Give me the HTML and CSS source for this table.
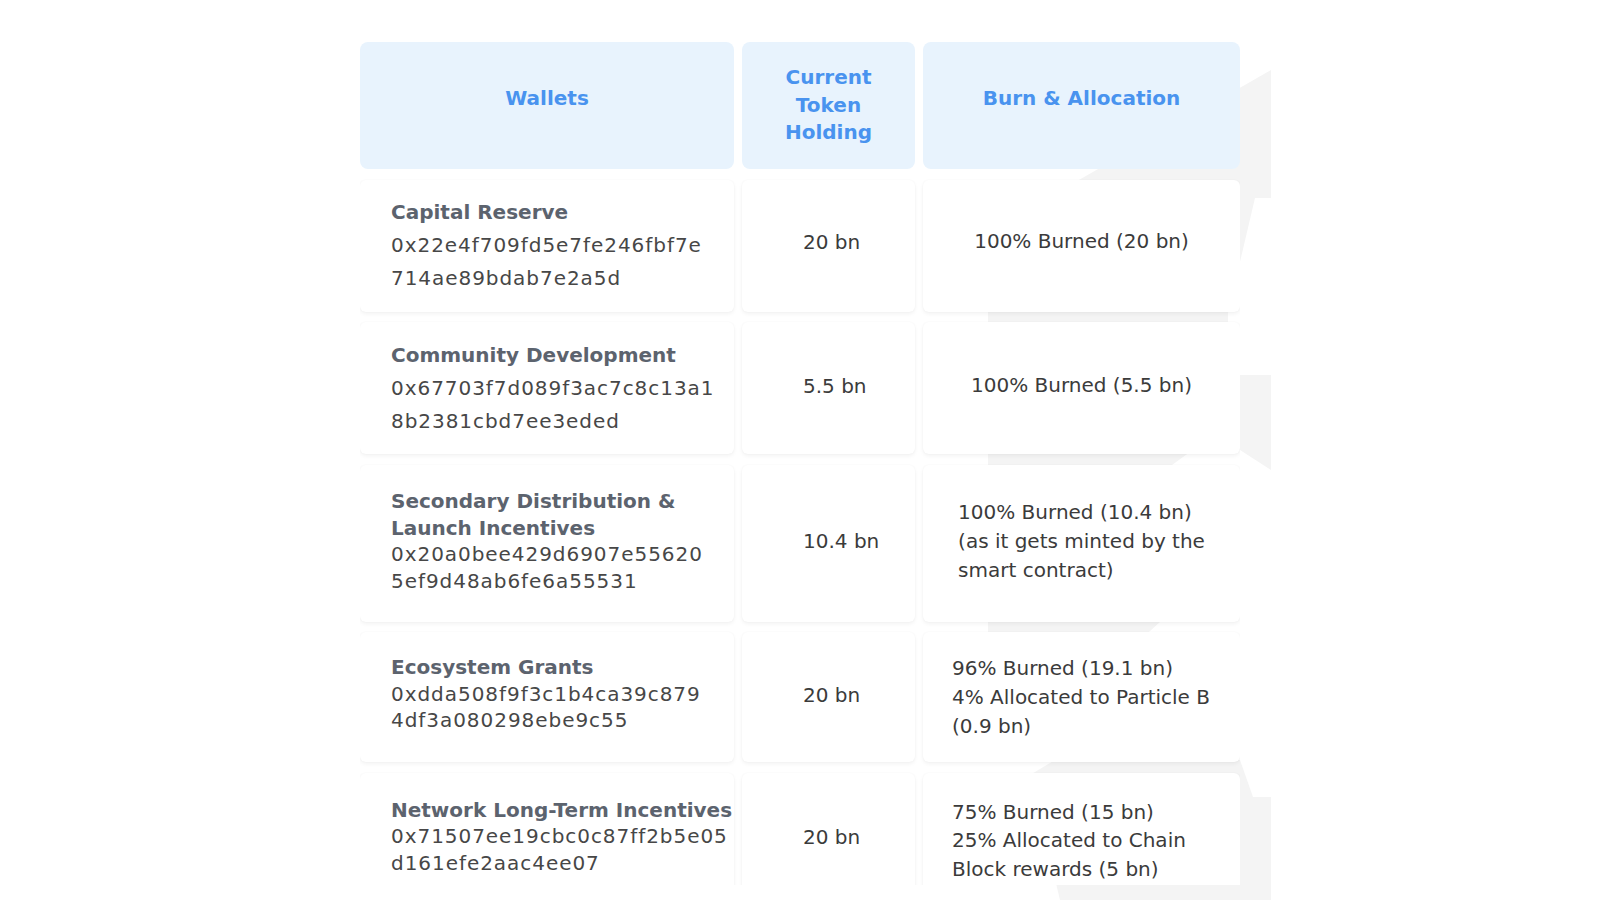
FILE: index.html
```html
<!DOCTYPE html>
<html lang="en">
<head>
<meta charset="utf-8">
<title>Wallets</title>
<link rel="stylesheet" href="styles.css">
</head>
<body>
<div class="stage">
  <svg class="backdrop" width="1600" height="900" viewBox="0 0 1600 900" aria-hidden="true">
    <polygon points="988,232 1271,70 1271,198 1255,198 1228,313 1228,322 988,322"/>
    <polygon points="988,322 1228,322 1239,375 1271,375 1271,470 1240,450 1190,452 1165,470 1160,622 1140,640 988,640"/>
    <polygon points="1030,775 1055,760 1240,760 1253,797 1271,797 1271,900 1060,900"/>
  </svg>

  <div class="table-clip">
    <div class="table">
      <div class="th th--single">Wallets</div>
      <div class="th">Current<br>Token<br>Holding</div>
      <div class="th th--single">Burn &amp; Allocation</div>

      <div class="td td-wallet td-wallet--loose">
        <div class="wallet-name">Capital Reserve</div>
        <div class="wallet-addr">0x22e4f709fd5e7fe246fbf7e<br>714ae89bdab7e2a5d</div>
      </div>
      <div class="td td-amount td-amount--r1">20 bn</div>
      <div class="td td-alloc td-alloc--r1"><div class="alloc">100% Burned (20 bn)</div></div>

      <div class="td td-wallet td-wallet--loose">
        <div class="wallet-name">Community Development</div>
        <div class="wallet-addr">0x67703f7d089f3ac7c8c13a1<br>8b2381cbd7ee3eded</div>
      </div>
      <div class="td td-amount td-amount--r2">5.5 bn</div>
      <div class="td td-alloc td-alloc--r2"><div class="alloc">100% Burned (5.5 bn)</div></div>

      <div class="td td-wallet td-wallet--r3">
        <div class="wallet-name">Secondary Distribution &amp;<br>Launch Incentives</div>
        <div class="wallet-addr">0x20a0bee429d6907e55620<br>5ef9d48ab6fe6a55531</div>
      </div>
      <div class="td td-amount">10.4 bn</div>
      <div class="td td-alloc"><div class="alloc">100% Burned (10.4 bn)<br>(as it gets minted by the<br>smart contract)</div></div>

      <div class="td td-wallet td-wallet--r4">
        <div class="wallet-name">Ecosystem Grants</div>
        <div class="wallet-addr">0xdda508f9f3c1b4ca39c879<br>4df3a080298ebe9c55</div>
      </div>
      <div class="td td-amount">20 bn</div>
      <div class="td td-alloc td-alloc--r4"><div class="alloc alloc--fill">96% Burned (19.1 bn)<br>4% Allocated to Particle B<br>(0.9 bn)</div></div>

      <div class="td td-wallet">
        <div class="wallet-name">Network Long-Term Incentives</div>
        <div class="wallet-addr">0x71507ee19cbc0c87ff2b5e05<br>d161efe2aac4ee07</div>
      </div>
      <div class="td td-amount td-amount--r5">20 bn</div>
      <div class="td td-alloc td-alloc--r5"><div class="alloc alloc--fill">75% Burned (15 bn)<br>25% Allocated to Chain<br>Block rewards (5 bn)</div></div>
    </div>
  </div>
</div>
</body>
</html>
```
FILE: styles.css
```css
* { box-sizing: border-box; }

html, body {
  margin: 0;
  background: #ffffff;
}

body {
  font-family: "DejaVu Sans", "Noto Sans", sans-serif;
  font-size: 20px;
  color: #454545;
}

.stage {
  position: relative;
  width: 1600px;
  height: 900px;
  overflow: hidden;
}

.backdrop {
  position: absolute;
  top: 0;
  left: 0;
  z-index: 0;
  fill: #f4f4f4;
}

.table-clip {
  position: relative;
  z-index: 1;
  width: 880px;
  height: 885px;
  margin: 0 auto;
  padding-top: 42px;
  overflow: hidden;
}

.table {
  display: grid;
  grid-template-columns: 374px 173px 317px;
  grid-template-rows: 127px 132px 132px 157px 130px 127px;
  column-gap: 8px;
  row-gap: 10.6px;
}

/* header */
.th {
  display: flex;
  align-items: center;
  justify-content: center;
  text-align: center;
  background: #e8f3fd;
  border-radius: 8px;
  color: #4993ef;
  font-weight: 700;
  font-size: 20px;
  line-height: 27.5px;
}

.th--single {
  padding-bottom: 14px;
}

/* body cells */
.td {
  display: flex;
  align-items: center;
  background: #ffffff;
  border-radius: 6px;
  box-shadow: 0 2px 4px rgba(0, 0, 0, 0.05), 0 0 2px rgba(0, 0, 0, 0.04);
}

.td-wallet {
  flex-direction: column;
  align-items: flex-start;
  justify-content: center;
  padding-left: 31px;
  line-height: 26.6px;
}

.td-wallet--loose {
  line-height: 33px;
}

.td-wallet--r3 {
  padding-bottom: 4px;
}

.td-wallet--r4 {
  padding-bottom: 7px;
}

.wallet-name {
  font-weight: 700;
  color: #5c636e;
  white-space: nowrap;
}

.wallet-addr {
  color: #474747;
  letter-spacing: 0.95px;
  white-space: nowrap;
}

.td-amount {
  padding-left: 61px;
  padding-bottom: 4px;
  color: #3b3b3b;
}

.td-amount--r1 { padding-bottom: 8px; }
.td-amount--r2 { padding-bottom: 5px; }
.td-amount--r5 { padding-bottom: 0; padding-top: 2px; }

.td-alloc {
  justify-content: center;
  padding: 0 29px 4px;
  color: #3b3b3b;
}

.td-alloc--r1 { padding-bottom: 8px; }
.td-alloc--r2 { padding-bottom: 5px; }
.td-alloc--r4 { padding-bottom: 0; }
.td-alloc--r5 { padding-bottom: 0; padding-top: 8px; }

.alloc {
  display: inline-block;
  text-align: left;
  line-height: 28.6px;
  white-space: nowrap;
}

.alloc--fill {
  width: 100%;
}
```
